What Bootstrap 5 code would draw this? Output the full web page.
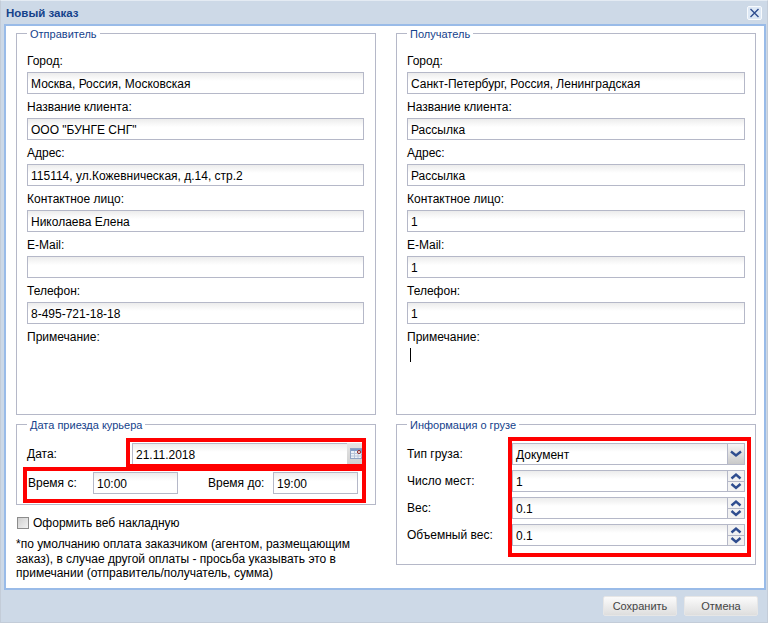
<!DOCTYPE html>
<html lang="ru">

<head>
    <meta charset="UTF-8">
    <meta name="viewport" content="width=device-width, initial-scale=1.0">
    <title>Новый заказ</title>
    <link href="https://cdn.jsdelivr.net/npm/bootstrap@5.3.0/dist/css/bootstrap.min.css" rel="stylesheet">
    <style>
        body {
            background: #fff;
            font-family: "Liberation Sans", Arial, sans-serif;
            font-size: 12px;
            line-height: 14px;
            color: #000;
        }

        /* Window */
        .win {
            position: relative;
            width: 768px;
            height: 623px;
            background: #cdd9e7;
            border: 1px solid #c3ccd8;
            border-top-color: #e4ebf3;
            overflow: hidden;
        }

        .win-head {
            height: 23px;
            padding: 0 5px 0 5px;
        }

        .win-title {
            color: #15428b;
            font-size: 11.5px;
            font-weight: 700;
        }

        .win-x {
            width: 15px;
            height: 14px;
            padding: 0;
            margin-top: 1px;
            background: #dde8f5;
            border: 1px solid #f7fafd;
            border-radius: 2px;
            line-height: 0;
        }

        .win-body {
            height: 566px;
            margin: 0 1px 0 3px;
            padding: 0 8px 0 10px;
            background: #fff;
            border: 2px solid #99bbe8;
            gap: 20px;
        }

        .win-foot {
            padding: 6px 9px 0 0;
            gap: 7px;
        }

        .form-col {
            width: 360px;
        }

        /* Fieldsets */
        .box {
            border: 1px solid #b5b8c8;
            padding: 7px 10px 0;
            margin: 0;
        }

        .box legend {
            float: none;
            width: auto;
            margin: 0;
            padding: 1px 3px 0;
            font-size: 11px;
            line-height: 14px;
            color: #15428b;
        }

        .box-tall {
            height: 389px;
            margin-bottom: 2px;
        }

        .box-left {
            padding-right: 11px;
        }

        .box-date {
            height: 88px;
            padding-top: 11px;
            padding-right: 10px;
        }

        .box-cargo {
            height: 148px;
            padding-top: 11px;
        }

        .fld-label {
            display: block;
            height: 24px;
            margin: 0;
            padding-top: 6px;
        }

        .fld-label-note {
            height: 20px;
        }

        .fld {
            display: block;
            width: 100%;
            height: 22px;
            padding: 1px 3px 0;
            font-size: 12px;
            line-height: 20px;
            color: #000;
            border: 1px solid #b5b8c8;
            border-radius: 0;
            background: linear-gradient(#ececec, #fff 8px);
        }

        .caret-bar {
            width: 1px;
            height: 14px;
            margin: 4px 0 0 3px;
            background: #000;
        }

        /* Date and cargo rows */
        .date-row {
            height: 22px;
            margin-bottom: 7px;
        }

        .date-label {
            width: 105px;
        }

        .time-fld {
            width: 85px;
            height: 22px;
        }

        .time-label {
            width: 65px;
            margin-left: 1px;
        }

        .time-label-2 {
            width: 65px;
            margin-left: 30px;
        }

        .combo {
            height: 22px;
            border: 1px solid #b5b8c8;
            border-right: 0;
            background: linear-gradient(#ececec, #fff 8px);
            padding: 1px 0 0 3px;
            line-height: 20px;
            min-width: 0;
        }

        .combo-trig {
            width: 18px;
            height: 22px;
            flex: none;
            background: linear-gradient(#f6f6f6, #c9c9c9);
            border: 1px solid #b5b8c8;
        }

        .date-trig {
            background: linear-gradient(#e6e6e6, #cfcfcf);
            border: 0;
        }

        .cargo-row {
            height: 22px;
            margin-bottom: 5px;
        }

        .cargo-label {
            width: 105px;
        }

        .spin-trig {
            width: 18px;
            height: 22px;
            flex: none;
            border: 1px solid #b5b8c8;
            background: #f2f2f2;
        }

        .spin-trig span {
            display: block;
            height: 10px;
            line-height: 0;
            text-align: center;
        }

        .spin-trig span + span {
            border-top: 1px solid #b5b8c8;
        }

        /* Below the date box */
        .web-check {
            margin: 11px 0 0 1px;
            gap: 4px;
            height: 14px;
        }

        .web-box {
            width: 12px;
            height: 12px;
            border: 1px solid #8c8c8c;
            background: linear-gradient(135deg, #cfcfcf, #f2f2f2);
        }

        .pay-note {
            margin: 7px 0 0;
            width: 350px;
            line-height: 14.5px;
        }

        .win-btn {
            width: 74px;
            height: 20px;
            padding: 0;
            font-size: 11px;
            line-height: 18px;
            color: #444;
            border: 1px solid #e6e6e6;
            border-radius: 2px;
            background: linear-gradient(#fbfbfb, #dedede);
        }

        /* Red annotation frames drawn over the screenshot */
        .red-frame {
            position: absolute;
            border: 4px solid #f00;
            pointer-events: none;
        }

        .rf-date {
            left: 125px;
            top: 437px;
            width: 240px;
            height: 30px;
        }

        .rf-time {
            left: 22px;
            top: 466px;
            width: 343px;
            height: 36px;
        }

        .rf-cargo {
            left: 507px;
            top: 436px;
            width: 243px;
            height: 120px;
        }
    </style>
</head>

<body>

    <div class="win d-flex flex-column">
        <div class="win-head d-flex align-items-center justify-content-between">
            <span class="win-title">Новый заказ</span>
            <button type="button" class="win-x">
                <svg width="13" height="12" viewBox="0 0 13 12"><path d="M2.5 2l8 8M10.5 2l-8 8" stroke="#2f4d8f" stroke-width="1.4" fill="none"/></svg>
            </button>
        </div>

        <div class="win-body d-flex">
            <!-- Left column -->
            <div class="form-col">
                <fieldset class="box box-tall box-left">
                    <legend>Отправитель</legend>
                    <label class="fld-label">Город:</label>
                    <input class="fld form-control" value="Москва, Россия, Московская">
                    <label class="fld-label">Название клиента:</label>
                    <input class="fld form-control" value='ООО "БУНГЕ СНГ"'>
                    <label class="fld-label">Адрес:</label>
                    <input class="fld form-control" value="115114, ул.Кожевническая, д.14, стр.2">
                    <label class="fld-label">Контактное лицо:</label>
                    <input class="fld form-control" value="Николаева Елена">
                    <label class="fld-label">E-Mail:</label>
                    <input class="fld form-control" value="">
                    <label class="fld-label">Телефон:</label>
                    <input class="fld form-control" value="8-495-721-18-18">
                    <label class="fld-label fld-label-note">Примечание:</label>
                </fieldset>

                <fieldset class="box box-date">
                    <legend>Дата приезда курьера</legend>
                    <div class="date-row d-flex align-items-center">
                        <span class="date-label">Дата:</span>
                        <div class="combo flex-grow-1">21.11.2018</div>
                        <div class="combo-trig date-trig">
                            <svg width="18" height="22" viewBox="0 0 18 22">
                                <rect x="3.500" y="5.500" width="11" height="10" fill="#eef2f8" stroke="#8fa3c4"/>
                                <rect x="4" y="6" width="11" height="2" fill="#7f9bc6"/>
                                <path d="M4 10.500h11M4 13h11M7.500 8v7M11 8v7" stroke="#b9c6da"/>
                                <circle cx="12" cy="9" r="1.500" fill="#fff" stroke="#8c1c1c"/>
                            </svg>
                        </div>
                    </div>
                    <div class="d-flex align-items-center">
                        <span class="time-label">Время с:</span>
                        <input class="fld form-control time-fld" value="10:00">
                        <span class="time-label-2">Время до:</span>
                        <input class="fld form-control time-fld" value="19:00">
                    </div>
                </fieldset>

                <div class="web-check d-flex align-items-center">
                    <span class="web-box"></span>
                    <span>Оформить веб накладную</span>
                </div>
                <p class="pay-note">*по умолчанию оплата заказчиком (агентом, размещающим заказ), в случае другой оплаты - просьба указывать это в примечании (отправитель/получатель, сумма)</p>
            </div>

            <!-- Right column -->
            <div class="form-col">
                <fieldset class="box box-tall">
                    <legend>Получатель</legend>
                    <label class="fld-label">Город:</label>
                    <input class="fld form-control" value="Санкт-Петербург, Россия, Ленинградская">
                    <label class="fld-label">Название клиента:</label>
                    <input class="fld form-control" value="Рассылка">
                    <label class="fld-label">Адрес:</label>
                    <input class="fld form-control" value="Рассылка">
                    <label class="fld-label">Контактное лицо:</label>
                    <input class="fld form-control" value="1">
                    <label class="fld-label">E-Mail:</label>
                    <input class="fld form-control" value="1">
                    <label class="fld-label">Телефон:</label>
                    <input class="fld form-control" value="1">
                    <label class="fld-label fld-label-note">Примечание:</label>
                    <div class="caret-bar"></div>
                </fieldset>

                <fieldset class="box box-cargo">
                    <legend>Информация о грузе</legend>
                    <div class="cargo-row d-flex align-items-center">
                        <span class="cargo-label">Тип груза:</span>
                        <div class="combo flex-grow-1">Документ</div>
                        <div class="combo-trig">
                            <svg width="16" height="20" viewBox="0 0 16 20"><path d="M3 7.500l5 4 5-4" stroke="#2f4d8f" stroke-width="2.400" fill="none"/></svg>
                        </div>
                    </div>
                    <div class="cargo-row d-flex align-items-center">
                        <span class="cargo-label">Число мест:</span>
                        <div class="combo flex-grow-1">1</div>
                        <div class="spin-trig">
                            <span><svg width="12" height="10" viewBox="0 0 12 10"><path d="M1.500 7.500L6 3.500l4.500 4" stroke="#2f4d8f" stroke-width="2.400" fill="none"/></svg></span>
                            <span><svg width="12" height="9" viewBox="0 0 12 9"><path d="M1.500 2l4.500 4 4.500-4" stroke="#2f4d8f" stroke-width="2.400" fill="none"/></svg></span>
                        </div>
                    </div>
                    <div class="cargo-row d-flex align-items-center">
                        <span class="cargo-label">Вес:</span>
                        <div class="combo flex-grow-1">0.1</div>
                        <div class="spin-trig">
                            <span><svg width="12" height="10" viewBox="0 0 12 10"><path d="M1.500 7.500L6 3.500l4.500 4" stroke="#2f4d8f" stroke-width="2.400" fill="none"/></svg></span>
                            <span><svg width="12" height="9" viewBox="0 0 12 9"><path d="M1.500 2l4.500 4 4.500-4" stroke="#2f4d8f" stroke-width="2.400" fill="none"/></svg></span>
                        </div>
                    </div>
                    <div class="cargo-row d-flex align-items-center">
                        <span class="cargo-label">Объемный вес:</span>
                        <div class="combo flex-grow-1">0.1</div>
                        <div class="spin-trig">
                            <span><svg width="12" height="10" viewBox="0 0 12 10"><path d="M1.500 7.500L6 3.500l4.500 4" stroke="#2f4d8f" stroke-width="2.400" fill="none"/></svg></span>
                            <span><svg width="12" height="9" viewBox="0 0 12 9"><path d="M1.500 2l4.500 4 4.500-4" stroke="#2f4d8f" stroke-width="2.400" fill="none"/></svg></span>
                        </div>
                    </div>
                </fieldset>
            </div>
        </div>

        <div class="win-foot d-flex justify-content-end">
            <button type="button" class="btn win-btn">Сохранить</button>
            <button type="button" class="btn win-btn">Отмена</button>
        </div>

        <div class="red-frame rf-date"></div>
        <div class="red-frame rf-time"></div>
        <div class="red-frame rf-cargo"></div>
    </div>

    <script src="https://cdn.jsdelivr.net/npm/bootstrap@5.3.0/dist/js/bootstrap.bundle.min.js"></script>
</body>

</html>
